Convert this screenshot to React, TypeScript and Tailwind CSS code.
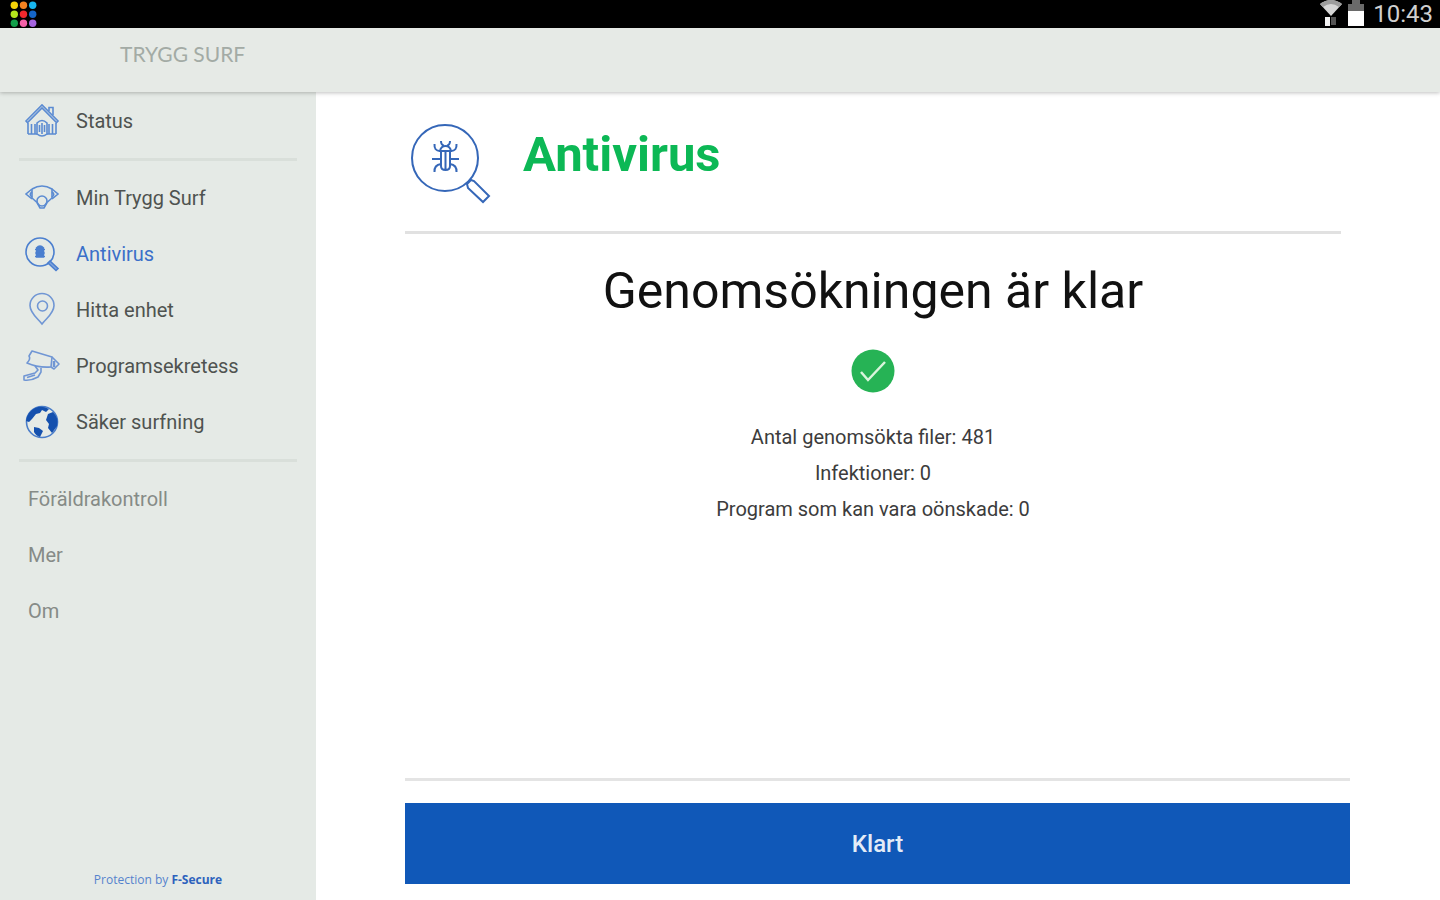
import React from 'react';

const dotColors = [
  '#f7d308', '#f58220', '#17b5ee',
  '#b5e61d', '#f0282d', '#1565c8',
  '#12a04a', '#f562a8', '#a565e0',
];

const StatusBar: React.FC = () => (
  <div className="h-7 shrink-0 bg-black flex items-center justify-between pl-[9px] pr-[7px] overflow-hidden">
    <svg className="w-7 h-7" viewBox="0 0 28 28" aria-hidden="true">
      {dotColors.map((color, i) => (
        <circle key={color} cx={5.3 + (i % 3) * 9.2} cy={5.3 + Math.floor(i / 3) * 9} r="3.7" fill={color} />
      ))}
    </svg>

    <div className="flex items-center gap-1">
      {/* Wifi with activity arrows */}
      <svg className="w-7 h-7" viewBox="0 0 28 28" aria-hidden="true">
        <path d="M5 4Q16 -4 27 4L16 16Z" fill="#d6d6d6" />
        <path d="M5 4Q16 -4 27 4L24 7Q16 1 8 7Z" fill="#9d9d9d" />
        <path d="M10 17h5v9h-5z" fill="#f2f2f2" />
        <path d="M16 17h5v8h-5z" fill="#555555" />
      </svg>
      {/* Battery */}
      <svg className="w-[18px] h-7" viewBox="0 0 18 28" aria-hidden="true">
        <path d="M5 0h8v4h4v8H1V4h4z" fill="#6a6a6a" />
        <path d="M1 11h16v15H1z" fill="#ffffff" />
      </svg>
      <span className="text-2xl leading-7 text-[#d0d0d0] pl-1">10:43</span>
    </div>
  </div>
);

const HomeIcon: React.FC = () => (
  <svg className="w-9 h-9" viewBox="0 0 36 36" fill="none" stroke="#5b8bd2" strokeWidth="1.6" aria-hidden="true">
    <path d="M2 18L18 2L34 18L32.500 19.500L18 5L3.500 19.500Z" />
    <path d="M25 8V4.500H29V12" />
    <path d="M4 20V31M7.500 21V31M11 21V31M25 21V31M28.500 21V31M32 20V31M4 31H13M23 31H32" />
    <path d="M13 31V20Q18 15 23 20V31Q18 35 13 31ZM18 20V31M15.500 22V29M20.500 22V29" />
  </svg>
);

const FamilyIcon: React.FC = () => (
  <svg className="w-9 h-9" viewBox="0 0 36 36" fill="none" stroke="#5b8bd2" strokeWidth="1.6" aria-hidden="true">
    <path d="M8 9Q18 3 28 9V18L23 22.500M8 9V18L13 22.500" />
    <path d="M8 9L2 14L8 19M28 9L34 14L28 19" />
    <path d="M8 12Q4.500 14.500 8 17M28 12Q31.500 14.500 28 17" />
    <circle cx="18" cy="21" r="5" />
    <path d="M13 22.500L16 28H20L23 22.500" />
  </svg>
);

const ScanIcon: React.FC = () => (
  <svg className="w-9 h-9" viewBox="0 0 36 36" fill="none" stroke="#4b7fcf" strokeWidth="1.6" aria-hidden="true">
    <circle cx="16" cy="16" r="14" />
    <path d="M26 25L34 32.500L32 34.500L24 27Z" fill="#7fa4dc" />
    <path d="M12.500 12Q16 8 19.500 12V21H12.500Z" fill="#4b7fcf" />
    <path d="M11 13.500H21M11 17H21M11 20.500H21" strokeWidth="1.2" />
  </svg>
);

const PinIcon: React.FC = () => (
  <svg className="w-9 h-9" viewBox="0 0 36 36" fill="none" stroke="#7096d4" strokeWidth="1.6" aria-hidden="true">
    <path d="M18 32C14 26.500 6 21.500 6 13.500A12 12 0 0 1 30 13.500C30 21.500 22 26.500 18 32Z" />
    <circle cx="18.500" cy="14" r="5" />
  </svg>
);

const CameraIcon: React.FC = () => (
  <svg className="w-9 h-9 overflow-visible" viewBox="0 0 36 36" fill="none" stroke="#7096d4" strokeWidth="1.6" strokeLinejoin="round" aria-hidden="true">
    <path d="M8 3L28 9L27 19Q14 20 3 15Q7 11 5 8Z" />
    <path d="M28 9L35 16L30 21L27 19" />
    <path d="M30 13V19" strokeWidth="2.500" />
    <path d="M11 18L14 22L11 25L0 28V32Q7 33 14 29L17 24V20" />
    <path d="M3 29.500L11 27" />
  </svg>
);

const GlobeIcon: React.FC = () => (
  <svg className="w-9 h-9" viewBox="0 0 36 36" aria-hidden="true">
    <circle cx="18" cy="18" r="15.500" fill="#e5eae6" stroke="#4a7dc9" strokeWidth="1.600" />
    <path d="M11 4Q18 1 25 5L22 8L18 6L16 9L12 10L8 15L5 18L2 17Q3 8 11 4Z" fill="#1450ae" />
    <path d="M24 10L29 8Q35 14 33 22L28 29L24 24L25 20L22 16Z" fill="#1450ae" />
    <path d="M10 23L15 24L19 27L16 33Q12 32 10 28Z" fill="#1450ae" />
  </svg>
);

const BugSearchIcon: React.FC = () => (
  <svg className="w-20 h-20 shrink-0" viewBox="0 0 80 80" fill="none" stroke="#3567b8" strokeWidth="2" aria-hidden="true">
    <circle cx="34" cy="34" r="33" />
    <path d="M56 60L60 56L63 57L78 72L72 78L57 64Z" />
    <path d="M30 27H39V42Q39 46 34.500 46Q30 46 30 42ZM34.500 28V46M29 27Q30 22 34.500 22Q39 22 40 27Z" />
    <path d="M30 17Q30 21 33 21.500M39 17Q39 21 36 21.500" />
    <path d="M29 27Q23 27 23.500 20M40 27Q46 27 45.500 20M30 35H21M39 35H48M30 40Q23 41 23.500 48M39 40Q46 41 45.500 48" />
  </svg>
);

const navItems = [
  { label: 'Min Trygg Surf', icon: <FamilyIcon />, active: false },
  { label: 'Antivirus', icon: <ScanIcon />, active: true },
  { label: 'Hitta enhet', icon: <PinIcon />, active: false },
  { label: 'Programsekretess', icon: <CameraIcon />, active: false },
  { label: 'Säker surfning', icon: <GlobeIcon />, active: false },
];

const moreItems = ['Föräldrakontroll', 'Mer', 'Om'];

const results = [
  'Antal genomsökta filer: 481',
  'Infektioner: 0',
  'Program som kan vara oönskade: 0',
];

const App: React.FC = () => {
  return (
    <div className="min-h-screen flex flex-col bg-white font-['Roboto',sans-serif]">
      <StatusBar />

      <header className="relative h-16 shrink-0 bg-[#e6eae6] px-[120px] pt-3 shadow-[0_1px_4px_rgba(0,0,0,0.25)]">
        <div className="font-['Lato',sans-serif] text-[21px] leading-7 text-[#a3aba5]">TRYGG SURF</div>
      </header>

      <div className="flex flex-1">
        {/* Sidebar */}
        <aside className="w-[316px] shrink-0 bg-[#e5eae6] flex flex-col pt-px text-xl">
          <nav className="flex-1">
            <a href="#status" className="h-14 flex items-center gap-4 pl-6 text-[#4f5350]">
              <HomeIcon />
              Status
            </a>
            <hr className="mx-[19px] my-[9px] border-0 h-[3px] bg-[#d9dfda]" />
            {navItems.map((item) => (
              <a
                key={item.label}
                href="#"
                aria-current={item.active ? 'page' : undefined}
                className={`h-14 flex items-center gap-4 pl-6 ${item.active ? 'text-[#3a6fc9]' : 'text-[#4f5350]'}`}
              >
                {item.icon}
                {item.label}
              </a>
            ))}
            <hr className="mx-[19px] my-[9px] border-0 h-[3px] bg-[#d9dfda]" />
            {moreItems.map((item) => (
              <a key={item} href="#" className="h-14 flex items-center pl-7 text-[#868b87]">
                {item}
              </a>
            ))}
          </nav>
          <p className="text-center font-['Open_Sans',sans-serif] text-xs leading-4 pb-3 text-[#5583cd]">
            Protection by <span className="font-bold text-[#2d62bd]">F-Secure</span>
          </p>
        </aside>

        {/* Scan result */}
        <main className="flex-1 flex flex-col pl-[89px] pr-[90px] pb-4">
          <div className="flex-1 pr-[9px]">
            <div className="flex items-start gap-8 pt-8 pl-[6px] pb-[27px] border-b-[3px] border-[#e1e1e1]">
              <BugSearchIcon />
              <h1 className="text-[49px] leading-[62px] font-bold text-[#0cb855]">Antivirus</h1>
            </div>

            <div className="flex flex-col items-center pt-[27px] text-[#111111]">
              <h2 className="text-[50px] leading-[60px]">Genomsökningen är klar</h2>
              <svg className="w-11 h-11 mt-7" viewBox="0 0 44 44" aria-hidden="true">
                <circle cx="22" cy="22" r="21.500" fill="#26b355" />
                <path d="M10 23L17 31L34 13" fill="none" stroke="#d9f5dc" strokeWidth="2.500" />
              </svg>
              <div className="pt-[26px] text-center text-xl leading-9 text-[#3c3c3c]">
                {results.map((line) => (
                  <p key={line} className="leading-9">{line}</p>
                ))}
              </div>
            </div>
          </div>

          <div className="border-t-[3px] border-[#e4e4e4] pt-[22px]">
            <button type="button" className="w-full h-[81px] bg-[#1058b8] text-2xl font-medium text-[#e3ecf7]">
              Klart
            </button>
          </div>
        </main>
      </div>
    </div>
  );
};

export default App;
